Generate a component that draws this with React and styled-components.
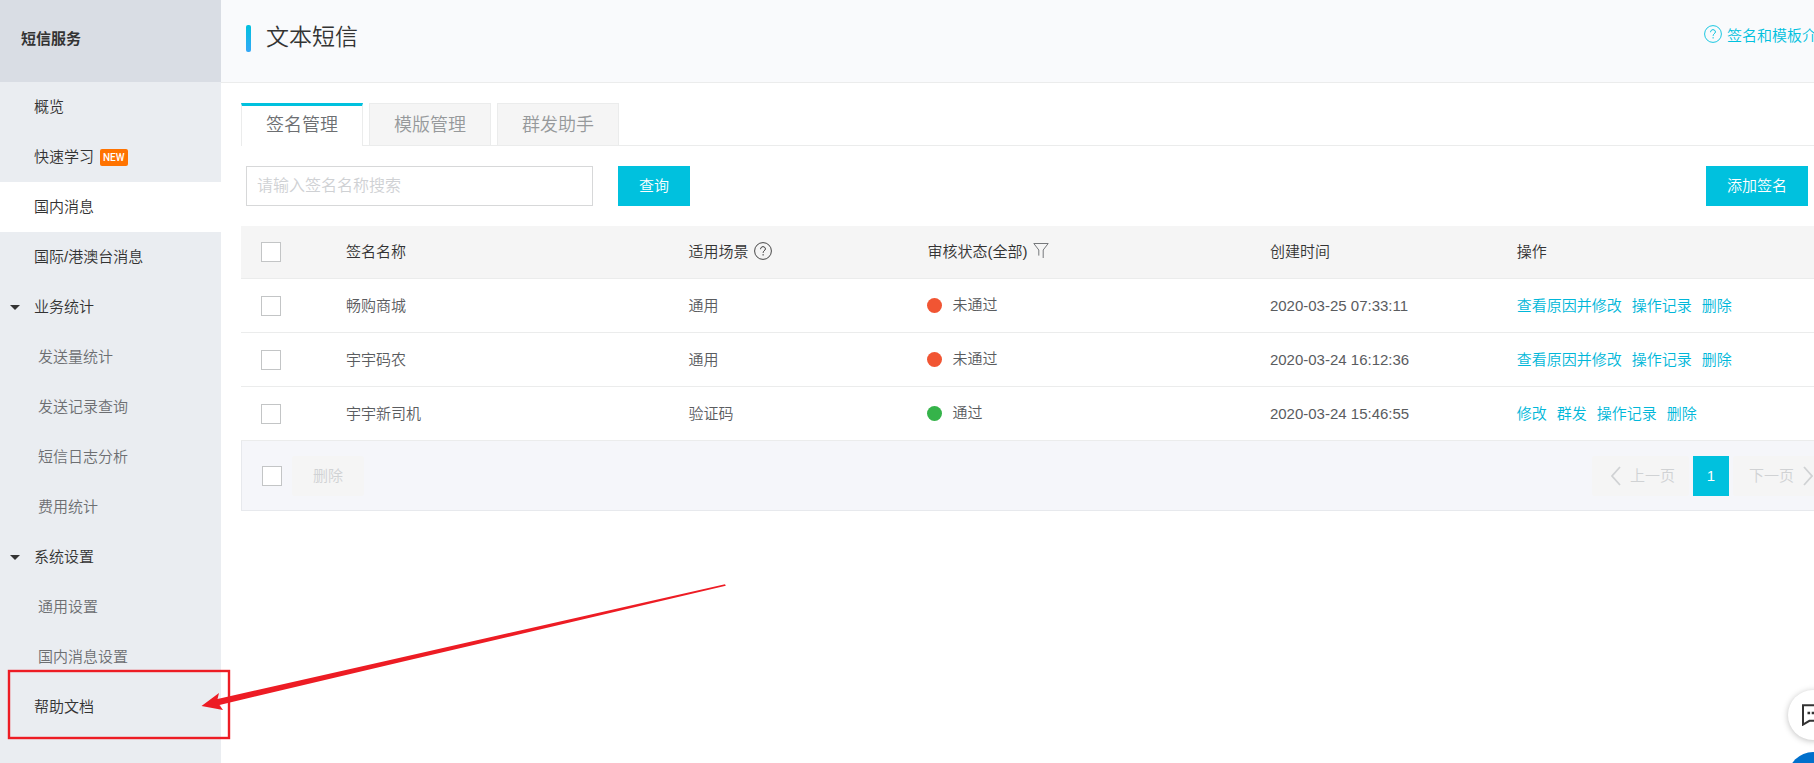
import React from 'react';
import styled, { createGlobalStyle, css } from 'styled-components';

const GlobalStyle = createGlobalStyle`
  *, *::before, *::after {
    box-sizing: border-box;
  }

  body {
    margin: 0;
    background: #fff;
    color: #333;
    font-family: 'Liberation Sans', 'Noto Sans CJK SC', sans-serif;
    font-size: 15px;
    font-weight: 350;
    line-height: 20px;
  }

  button, input {
    font: inherit;
  }

  a {
    color: inherit;
    text-decoration: none;
  }
`;

const Page = styled.div`
  display: flex;
  min-height: 100vh;
  overflow: hidden;
`;

/* ---------- sidebar ---------- */

const Sidebar = styled.aside`
  flex: none;
  width: 221px;
  background: #eaedf1;
`;

const SidebarTitle = styled.div`
  height: 82px;
  padding: 29px 21px 0;
  background: #d9dde4;
  font-weight: bold;
`;

const NavItem = styled.a`
  display: flex;
  align-items: center;
  height: 50px;
  padding-left: ${({ $sub }) => ($sub ? 38 : 34)}px;
  color: ${({ $sub }) => ($sub ? '#6d6f72' : '#333')};
  background: ${({ $active }) => ($active ? '#fff' : 'transparent')};

  ${({ $group }) =>
    $group &&
    css`
      padding-left: 10px;
      gap: 14px;

      &::before {
        content: '';
        border: 5px solid transparent;
        border-top-color: #333;
        border-bottom: 0;
      }
    `}
`;

const NewBadge = styled.span`
  margin-left: 6px;
  padding: 0 3px;
  border-radius: 2px;
  background: #ff7300;
  color: #fff;
  font-family: Roboto, sans-serif;
  font-size: 10px;
  font-weight: 500;
  line-height: 17px;
`;

/* ---------- main area ---------- */

const Main = styled.main`
  flex: 1;
  min-width: 0;
  margin-right: -20px; /* the console frame runs past the window edge */
`;

const Header = styled.header`
  display: flex;
  justify-content: space-between;
  height: 83px;
  padding: 25px 2px 0 25px;
  background: #f9fafc;
  border-bottom: 1px solid #ebecec;
`;

const Title = styled.h1`
  display: flex;
  gap: 15px;
  margin: 0;
  height: 27px;
  font-size: 23px;
  font-weight: inherit;
  line-height: 24px;

  &::before {
    content: '';
    width: 5px;
    border-radius: 2px;
    background: linear-gradient(#00c1de, #35a7f7);
  }
`;

const HelpLink = styled.a`
  display: flex;
  gap: 5px;
  color: #00c1de;
  line-height: 22px;
  white-space: nowrap;
`;

const Content = styled.div`
  padding: 20px 0 0 20px;
`;

const Tabs = styled.div`
  display: flex;
  gap: 6px;
  border-bottom: 1px solid #ebecec;
`;

const Tab = styled.button`
  height: 42px;
  padding: 0 24px;
  border: 1px solid #ebecec;
  border-bottom: 0;
  background: #f5f5f5;
  color: #96999b;
  font-size: 18px;
  cursor: pointer;

  ${({ $active }) =>
    $active &&
    css`
      height: 43px;
      margin-bottom: -1px;
      border-top: 3px solid #00c1de;
      background: #fff;
      color: #6d6f72;
      padding-bottom: 3px;
    `}
`;

const Toolbar = styled.form`
  display: flex;
  align-items: center;
  padding: 20px 26px 20px 5px;
`;

const SearchInput = styled.input`
  width: 347px;
  height: 40px;
  padding: 0 10px;
  border: 1px solid #d7d8d9;
  background: #fff;
  font-size: 16px;
  outline: none;

  &::placeholder {
    color: #cfd1d4;
    opacity: 1;
  }
`;

const PrimaryButton = styled.button`
  height: 40px;
  padding: 0 21px;
  margin-left: ${({ $end }) => ($end ? 'auto' : '25px')};
  border: 0;
  background: #00c1de;
  color: #fff;
  cursor: pointer;
`;

const Checkbox = styled.input`
  appearance: none;
  display: block;
  flex: none;
  width: 20px;
  height: 20px;
  margin: 0;
  border: 1px solid #c3c5c6;
  background: #fff;

  &:checked {
    background: #00c1de;
  }
`;

const Table = styled.table`
  width: 100%;
  table-layout: fixed;
  border-collapse: collapse;

  th, td {
    padding: 0 8px;
    border-bottom: 1px solid #ebecec;
    text-align: left;
    font-weight: inherit;
    white-space: nowrap;
  }

  th {
    height: 52px;
    background: #f5f5f5;
  }

  td {
    height: 54px;
    padding-top: 2px;
    color: #5a5c5f;
  }

  th:first-child, td:first-child {
    padding-left: 20px;
  }
`;

const Col = styled.col`
  width: ${({ $width }) => $width};
`;

const HeadCell = styled.span`
  display: flex;
  align-items: center;
  gap: ${({ $gap }) => $gap || 0}px;

  svg {
    margin-bottom: 2px;
  }
`;

const FilterButton = styled.button`
  display: flex;
  padding: 0;
  border: 0;
  background: none;
  color: #76787b;
  cursor: pointer;
`;

const Status = styled.span`
  display: flex;
  align-items: center;
  gap: 10px;
  padding-bottom: 2px;

  &::before {
    content: '';
    width: 15px;
    height: 15px;
    border-radius: 50%;
    background: ${({ $ok }) => ($ok ? '#35b34a' : '#f15533')};
  }
`;

const Actions = styled.div`
  display: flex;
  gap: 10px;
  color: #00b7d9;
`;

const Footer = styled.div`
  display: flex;
  align-items: center;
  height: 70px;
  padding: 1px 3px 0 20px;
  border: 1px solid #e7e9ed;
  border-top: 0;
  background: #f5f6fa;
`;

const GhostButton = styled.button`
  display: flex;
  align-items: center;
  gap: 9px;
  height: 40px;
  padding: 0 16px;
  border: 0;
  border-radius: 2px;
  background: #f5f5f5;
  color: #d0d2d4;
`;

const DeleteButton = styled(GhostButton)`
  margin-left: 10px;
  padding: 0 21px;
`;

const PrevButton = styled(GhostButton)`
  padding: 0 14px 0 18px;
`;

const Pager = styled.nav`
  display: flex;
  gap: 4px;
  margin-left: auto;
`;

const PageNumber = styled.button`
  width: 36px;
  height: 40px;
  padding: 0;
  border: 0;
  background: #00c1de;
  color: #fff;
`;

/* ---------- overlays ---------- */

const Marker = styled.svg`
  position: absolute;
  top: 0;
  left: 0;
  pointer-events: none;
`;

const FloatBar = styled.div`
  position: fixed;
  right: -24px;
  top: 690px;
  display: flex;
  flex-direction: column;
  gap: 12px;
`;

const FloatButton = styled.button`
  display: flex;
  align-items: center;
  justify-content: center;
  width: 50px;
  height: 50px;
  padding: 0;
  border: 0;
  border-radius: 50%;
  background: ${({ $blue }) => ($blue ? '#0070cc' : '#fff')};
  color: #333;
  box-shadow: ${({ $blue }) => ($blue ? 'none' : '0 1px 6px rgba(0, 0, 0, 0.25)')};
`;

/* ---------- icons ---------- */

const QuestionIcon = () => (
  <svg width="18" height="18" viewBox="0 0 18 18" fill="none" stroke="currentColor">
    <circle cx="9" cy="9" r="8.4" strokeWidth="0.9" />
    <path d="M6.6 7.2C6.6 5.6 7.6 4.7 9 4.7s2.4.9 2.4 2.2c0 1.8-2.3 1.9-2.3 3.9M9.1 12.1v1.4" />
  </svg>
);

const FunnelIcon = () => (
  <svg width="16" height="17" viewBox="0 0 16 17" fill="none" stroke="currentColor">
    <path d="M.8 1.5h14.4L10.2 8v8M.8 1.5 5.8 8v5.6" />
  </svg>
);

const Chevron = ({ d }) => (
  <svg width="11" height="20" viewBox="0 0 11 20" fill="none" stroke="currentColor" strokeWidth="1.8">
    <path d={d} />
  </svg>
);

const ChatIcon = () => (
  <svg width="22" height="22" viewBox="0 0 22 22" fill="none" stroke="currentColor" strokeWidth="2">
    <path d="M1 1.2h20v15.6H7.4L1 20.6z" />
    <path d="M5.500 9h2.600M9.700 9h2.600M13.900 9h2.600" strokeWidth="2.6" />
  </svg>
);

const menu = [
  { label: '概览' },
  { label: '快速学习', isNew: true },
  { label: '国内消息', active: true },
  { label: '国际/港澳台消息' },
  { label: '业务统计', group: true },
  { label: '发送量统计', sub: true },
  { label: '发送记录查询', sub: true },
  { label: '短信日志分析', sub: true },
  { label: '费用统计', sub: true },
  { label: '系统设置', group: true },
  { label: '通用设置', sub: true },
  { label: '国内消息设置', sub: true },
  { label: '帮助文档' },
];

const signatures = [
  {
    name: '畅购商城',
    scene: '通用',
    passed: false,
    time: '2020-03-25 07:33:11',
    actions: ['查看原因并修改', '操作记录', '删除'],
  },
  {
    name: '宇宇码农',
    scene: '通用',
    passed: false,
    time: '2020-03-24 16:12:36',
    actions: ['查看原因并修改', '操作记录', '删除'],
  },
  {
    name: '宇宇新司机',
    scene: '验证码',
    passed: true,
    time: '2020-03-24 15:46:55',
    actions: ['修改', '群发', '操作记录', '删除'],
  },
];

const App = () => {
  return (
    <>
      <GlobalStyle />
      <Page>
        <Sidebar>
          <SidebarTitle>短信服务</SidebarTitle>
          <nav>
            {menu.map((item) => (
              <NavItem key={item.label} href="#" $sub={item.sub} $group={item.group} $active={item.active}>
                {item.label}
                {item.isNew && <NewBadge>NEW</NewBadge>}
              </NavItem>
            ))}
          </nav>
        </Sidebar>

        <Main>
          <Header>
            <Title>文本短信</Title>
            <HelpLink href="#">
              <QuestionIcon />
              签名和模板介绍
            </HelpLink>
          </Header>

          <Content>
            <Tabs role="tablist">
              <Tab type="button" role="tab" aria-selected="true" $active>签名管理</Tab>
              <Tab type="button" role="tab" aria-selected="false">模版管理</Tab>
              <Tab type="button" role="tab" aria-selected="false">群发助手</Tab>
            </Tabs>

            <Toolbar onSubmit={(e) => e.preventDefault()}>
              <SearchInput type="text" aria-label="签名名称" placeholder="请输入签名名称搜索" />
              <PrimaryButton type="submit">查询</PrimaryButton>
              <PrimaryButton type="button" $end>添加签名</PrimaryButton>
            </Toolbar>

            <Table>
              <colgroup>
                <Col $width="97px" />
                <Col $width="21.5%" />
                <Col $width="15%" />
                <Col $width="21.5%" />
                <Col $width="15.5%" />
                <Col $width="auto" />
              </colgroup>
              <thead>
                <tr>
                  <th><Checkbox type="checkbox" aria-label="全选" /></th>
                  <th>签名名称</th>
                  <th><HeadCell $gap={5}>适用场景<QuestionIcon /></HeadCell></th>
                  <th>
                    <HeadCell $gap={6}>
                      审核状态(全部)
                      <FilterButton type="button" aria-label="筛选"><FunnelIcon /></FilterButton>
                    </HeadCell>
                  </th>
                  <th>创建时间</th>
                  <th>操作</th>
                </tr>
              </thead>
              <tbody>
                {signatures.map((row) => (
                  <tr key={row.name}>
                    <td><Checkbox type="checkbox" aria-label={row.name} /></td>
                    <td>{row.name}</td>
                    <td>{row.scene}</td>
                    <td><Status $ok={row.passed}>{row.passed ? '通过' : '未通过'}</Status></td>
                    <td>{row.time}</td>
                    <td>
                      <Actions>
                        {row.actions.map((action) => (
                          <a key={action} href="#">{action}</a>
                        ))}
                      </Actions>
                    </td>
                  </tr>
                ))}
              </tbody>
            </Table>

            <Footer>
              <Checkbox type="checkbox" aria-label="全选" />
              <DeleteButton type="button">删除</DeleteButton>
              <Pager aria-label="分页">
                <PrevButton type="button">
                  <Chevron d="M10 1 2 10l8 9" />
                  上一页
                </PrevButton>
                <PageNumber type="button">1</PageNumber>
                <GhostButton type="button">
                  下一页
                  <Chevron d="M1 1l8 9-8 9" />
                </GhostButton>
              </Pager>
            </Footer>
          </Content>
        </Main>
      </Page>

      <FloatBar>
        <FloatButton type="button" aria-label="咨询"><ChatIcon /></FloatButton>
        <FloatButton type="button" aria-label="更多" $blue />
      </FloatBar>

      <Marker width="740" height="750" viewBox="0 0 740 750" fill="none">
        <rect x="9" y="671" width="220" height="67" stroke="#ed1c24" strokeWidth="2.4" />
        <path
          d="M201.5 706 219 693l-1.500 6L400 657.700 725 584.300l.8 1.400L400 662.300 219.500 705l3.500 5z"
          fill="#ed1c24"
        />
      </Marker>
    </>
  );
};

export default App;
